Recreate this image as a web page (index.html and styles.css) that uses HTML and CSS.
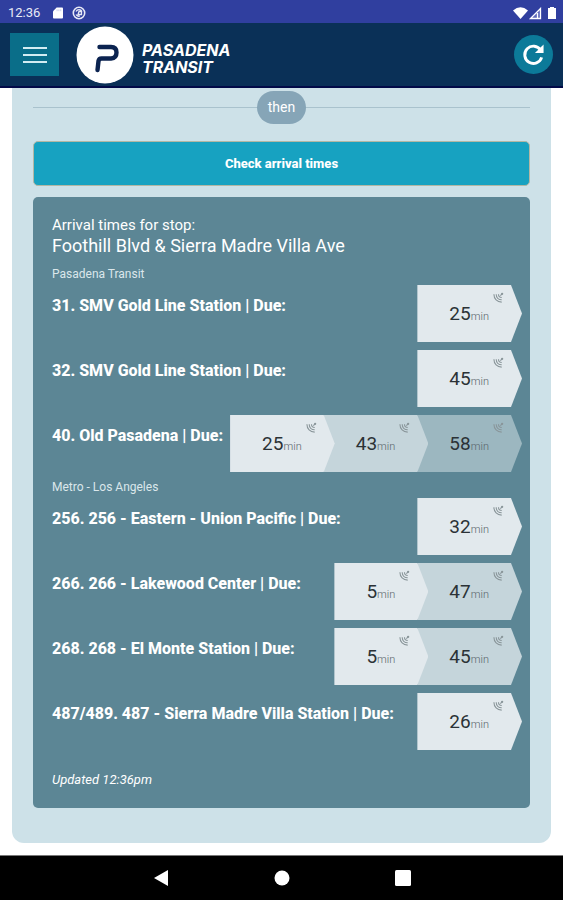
FILE: index.html
```html
<!DOCTYPE html>
<html lang="en">
<head>
<meta charset="utf-8">
<meta name="viewport" content="width=device-width, initial-scale=1">
<title>Pasadena Transit</title>
<link rel="stylesheet" href="styles.css">
</head>
<body>
<svg class="sprite" aria-hidden="true">
  <symbol id="live" viewBox="0 0 12 12">
    <g fill="none" stroke="currentColor" stroke-width="1.200">
      <path d="M1 2.500C1 7.500 4.500 11 9.500 11"/>
      <path d="M3.500 2.500C3.500 6 6 8.500 9.500 8.500"/>
      <path d="M6 2.500C6 4.800 7.200 6 9.500 6"/>
      <path d="M8 4L10.500 1.500"/>
    </g>
    <circle cx="10" cy="2" r="1.200" fill="currentColor"/>
  </symbol>
</svg>

<div class="status">
  <span class="clock">12:36</span>
  <svg class="sd" viewBox="0 0 11 12" aria-hidden="true"><path d="M4 0h6q1 0 1 1v10q0 1-1 1H1q-1 0-1-1V4z" fill="#fff"/><path d="M4.500 2v2M6.500 2v2M8.500 2v2" stroke="#c5cae9"/></svg>
  <svg class="at" viewBox="0 0 14 14" fill="none" stroke="#e8eaf6" aria-hidden="true"><circle cx="7" cy="7" r="5.700" stroke-width="1.600"/><path d="M4 5.500a3.300 3.300 0 0 1 6 0M4 8.500a3.300 3.300 0 0 0 4 1.500M7 5.500h2.500v3H6z" stroke-width="1.300"/></svg>
  <svg class="signals" viewBox="0 0 44 14" aria-hidden="true">
    <path d="M0 4.500Q7.500-2 15 4.500L7.500 13z" fill="#fff"/>
    <path d="M28 1v12H16z" fill="#5f6abb"/><path d="M27.500 2.500v10H17.500zM24.500 7V12" fill="none" stroke="#fff" stroke-width="1.300"/>
    <path d="M35 2h2V1h4v1h2v11h-8z" fill="#fff"/>
  </svg>
</div>

<header class="topbar">
  <button class="menu" type="button" aria-label="Menu"><svg viewBox="0 0 24 18" aria-hidden="true"><path d="M0 2h24M0 9h24M0 16h24" stroke="#d3edf2" stroke-width="2"/></svg></button>
  <a class="brand" href="#">
    <svg viewBox="0 0 58 58" aria-hidden="true"><circle cx="29" cy="29" r="28.500" fill="#fff"/><path d="M23.500 21H35Q40.500 21 40.500 26.500T35 32.500H25.500Q23 32.500 22.500 35L21.500 44" fill="none" stroke="#0b2350" stroke-width="4.400" stroke-linecap="round" stroke-linejoin="round"/></svg>
    <span>PASADENA<br>TRANSIT</span>
  </a>
  <button class="refresh" type="button" aria-label="Refresh"><svg viewBox="0 0 24 24" aria-hidden="true"><path d="M19.500 7.500A9 9 0 1 0 20.500 15" fill="none" stroke="#fff" stroke-width="3"/><path d="M22.500 1.500v9h-9z" fill="#fff"/></svg></button>
</header>

<main>
  <div class="card">
    <div class="divider"><span>then</span></div>
    <button class="check" type="button">Check arrival times</button>
    <section class="panel">
      <p class="intro">Arrival times for stop:</p>
      <h1>Foothill Blvd &amp; Sierra Madre Villa Ave</h1>
      <h2>Pasadena Transit</h2>
      <ul>
        <li><h3>31. SMV Gold Line Station | Due:</h3><div class="times"><span class="time">25<small>min</small><svg><use href="#live"/></svg></span></div></li>
        <li><h3>32. SMV Gold Line Station | Due:</h3><div class="times"><span class="time">45<small>min</small><svg><use href="#live"/></svg></span></div></li>
        <li><h3>40. Old Pasadena | Due:</h3><div class="times"><span class="time">25<small>min</small><svg><use href="#live"/></svg></span><span class="time">43<small>min</small><svg><use href="#live"/></svg></span><span class="time">58<small>min</small><svg><use href="#live"/></svg></span></div></li>
      </ul>
      <h2>Metro - Los Angeles</h2>
      <ul>
        <li><h3>256. 256 - Eastern - Union Pacific | Due:</h3><div class="times"><span class="time">32<small>min</small><svg><use href="#live"/></svg></span></div></li>
        <li><h3>266. 266 - Lakewood Center | Due:</h3><div class="times"><span class="time">5<small>min</small><svg><use href="#live"/></svg></span><span class="time">47<small>min</small><svg><use href="#live"/></svg></span></div></li>
        <li><h3>268. 268 - El Monte Station | Due:</h3><div class="times"><span class="time">5<small>min</small><svg><use href="#live"/></svg></span><span class="time">45<small>min</small><svg><use href="#live"/></svg></span></div></li>
        <li><h3>487/489. 487 - Sierra Madre Villa Station | Due:</h3><div class="times"><span class="time">26<small>min</small><svg><use href="#live"/></svg></span></div></li>
      </ul>
      <p class="updated">Updated 12:36pm</p>
    </section>
  </div>
</main>

<nav class="system" aria-label="System">
  <button type="button" aria-label="Back"><svg viewBox="0 0 16 16"><path d="M15 0v16L1 8z"/></svg></button>
  <button type="button" aria-label="Home"><svg viewBox="0 0 16 16"><circle cx="8" cy="8" r="7.500"/></svg></button>
  <button type="button" aria-label="Recent apps"><svg viewBox="0 0 16 16"><rect width="16" height="16" rx="1.500"/></svg></button>
</nav>
</body>
</html>
```
FILE: styles.css
```css
* { box-sizing: border-box; }

body {
  margin: 0;
  min-height: 100vh;
  display: flex;
  flex-direction: column;
  background: #fff;
  color: #fff;
  font-family: Roboto, "Liberation Sans", sans-serif;
}

h1, h2, h3, p, ul { margin: 0; padding: 0; font-weight: 400; }
ul { list-style: none; }
button { border: 0; padding: 0; font: inherit; color: inherit; }
svg { display: block; }
.sprite { position: absolute; width: 0; height: 0; }

.status {
  display: flex;
  align-items: center;
  gap: 9px;
  height: 23px;
  padding: 2px 6px 0 8px;
  background: #303f9f;
  font-size: 13px;
  color: #e8eaf6;
}
.clock { margin-right: 4px; }
.sd { width: 10px; height: 12px; }
.at { width: 14px; height: 14px; }
.signals { width: 44px; height: 14px; margin-left: auto; }

.topbar {
  display: flex;
  align-items: center;
  height: 65px;
  padding: 0 10px;
  background: #0a3057;
  border-bottom: 2px solid #020a48;
}
.menu {
  display: grid;
  place-items: center;
  width: 49px;
  height: 43px;
  background: #0a6e89;
}
.menu svg { width: 24px; height: 18px; }
.brand {
  display: flex;
  align-items: center;
  gap: 8px;
  margin-left: 17px;
  color: #fff;
  font: italic 700 16px/17px Inter, sans-serif;
  text-decoration: none;
}
.brand svg { width: 58px; height: 58px; }
.brand span { padding-top: 8px; }
.refresh {
  display: grid;
  place-items: center;
  width: 39px;
  height: 39px;
  margin-left: auto;
  border-radius: 50%;
  background: #0c7a99;
}
.refresh svg { width: 23px; height: 23px; }

main { flex: 1; padding: 0 12px 12px; }
.card {
  padding: 3px 21px 35px;
  border-radius: 0 0 12px 12px;
  background: #cde1e8;
}
.divider {
  display: flex;
  align-items: center;
  margin-bottom: 17px;
}
.divider::before, .divider::after {
  content: "";
  flex: 1;
  height: 1px;
  background: #a9c2cd;
}
.divider span {
  padding: 0 11px;
  border-radius: 17px;
  background: #86a5b7;
  font-size: 14px;
  line-height: 33px;
}
.check {
  display: block;
  width: 100%;
  height: 45px;
  margin-bottom: 11px;
  border: 1px solid #b3b7a4;
  border-radius: 5px;
  background: #17a2c1;
  font-size: 13px;
  font-weight: 800;
}

.panel {
  padding: 18px 8px 18px 19px;
  border-radius: 5px;
  background: #5c8695;
}
.intro { font-size: 15px; line-height: 20px; }
h1 { margin-bottom: 2px; font-size: 18px; line-height: 22px; }
h2 {
  padding: 7px 0 3px;
  color: #dbe7eb;
  font-size: 12px;
  line-height: 16px;
}
ul { display: grid; grid-template-columns: minmax(0, 1fr); gap: 8px; }
li { display: flex; justify-content: space-between; }
h3 {
  padding-top: 11px;
  font-size: 16px;
  font-weight: 800;
  line-height: 20px;
  white-space: nowrap;
}
.times { display: flex; }
.time {
  position: relative;
  height: 57px;
  padding: 0 33px 0 32px;
  background: #e2e9ed;
  clip-path: polygon(0 0, calc(100% - 11px) 0, 100% 50%, calc(100% - 11px) 100%, 0 100%);
  color: #2b3236;
  font-size: 19px;
  line-height: 57px;
  white-space: nowrap;
}
.time:nth-child(1) { z-index: 3; }
.time:nth-child(2) { z-index: 2; margin-left: -11px; background: #c5d5db; }
.time:nth-child(3) { z-index: 1; margin-left: -11px; background: #9cb7c0; }
.time small { color: #59656b; font-size: 11px; font-weight: 300; }
.time svg {
  position: absolute;
  top: 7px;
  right: 18px;
  width: 11px;
  height: 11px;
  color: #899599;
}
.updated {
  padding-top: 20px;
  font-size: 13px;
  font-style: italic;
  line-height: 20px;
}

.system {
  display: flex;
  justify-content: center;
  gap: 105px;
  height: 45px;
  border-top: 1px solid #777;
  background: #000;
}
.system button { width: 16px; background: none; }
.system svg { width: 16px; height: 16px; fill: #fff; }
```
